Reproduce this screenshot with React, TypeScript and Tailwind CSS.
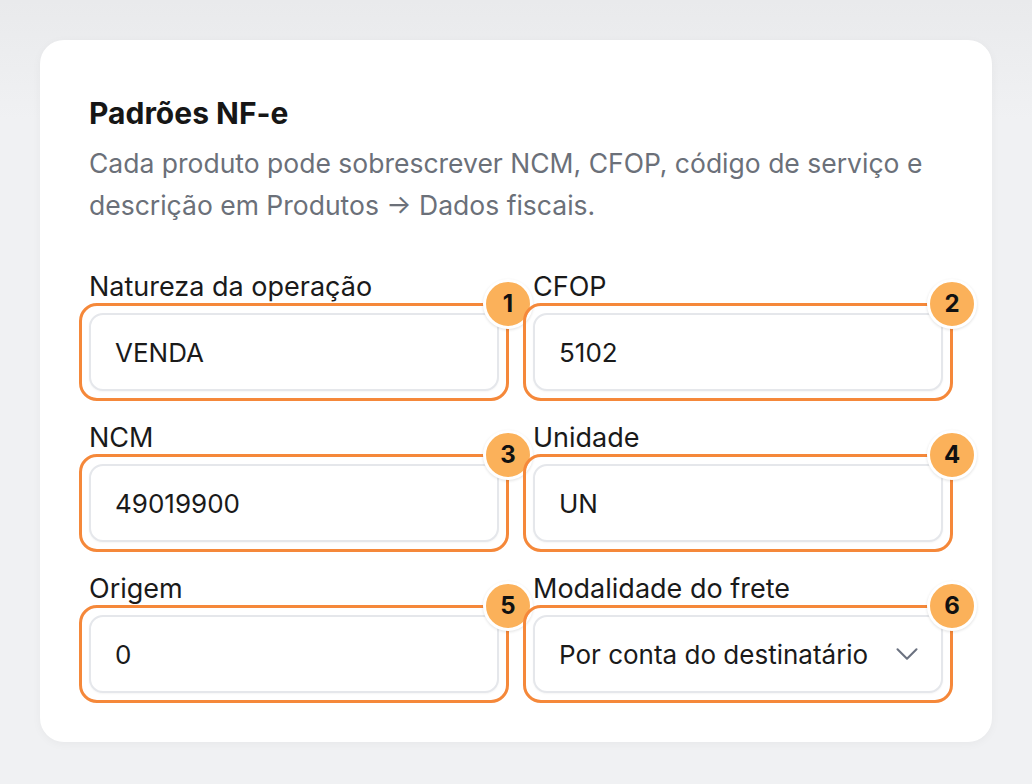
import { ChevronDown } from 'lucide-react';

interface Field {
  label: string;
  value: string;
  select?: boolean;
}

const fields: Field[] = [
  { label: 'Natureza da operação', value: 'VENDA' },
  { label: 'CFOP', value: '5102' },
  { label: 'NCM', value: '49019900' },
  { label: 'Unidade', value: 'UN' },
  { label: 'Origem', value: '0' },
  { label: 'Modalidade do frete', value: 'Por conta do destinatário', select: true },
];

const FieldBox = ({ field, index }: { field: Field; index: number }) => (
  <div className="flex flex-col">
    <label className="text-[27px] leading-[30px] text-[#1a1a1a] mb-[11px] whitespace-nowrap">{field.label}</label>
    <div className="relative">
      <div
        className={`h-[78px] rounded-[14px] border-2 border-[#e5e7eb] bg-white flex items-center pl-[24px] shadow-[0_1px_2px_rgba(0,0,0,0.04)] ${
          field.select ? 'pr-[15px]' : 'pr-[22px]'
        }`}
      >
        <span className="flex-1 text-[26px] text-[#1a1a1a] whitespace-nowrap overflow-hidden">{field.value}</span>
        {field.select && (
          <ChevronDown className="w-[38px] h-[38px] text-[#6b7280] ml-[8px] shrink-0" strokeWidth={1.3} />
        )}
      </div>
      {/* highlight overlay */}
      <div className="absolute -inset-[10px] rounded-[18px] border-[3px] border-[#f5883a] pointer-events-none" />
      <div className="absolute -top-[34px] -right-[34px] w-[50px] h-[50px] rounded-full bg-[#fbb15a] border-[3px] border-white shadow-[0_1px_3px_rgba(0,0,0,0.12)] flex items-center justify-center text-[24px] font-bold text-[#111]">
        {index + 1}
      </div>
    </div>
  </div>
);

export default function App() {
  return (
    <div className="min-h-[784px] bg-gradient-to-b from-[#e9eaec] to-[#f0f1f3] to-[120px] p-[40px] font-['Inter',sans-serif]">
      <div className="bg-white rounded-[24px] shadow-[0_2px_10px_rgba(0,0,0,0.04)] pt-[55px] px-[49px] pb-[49px]">
        <h2 className="text-[30px] leading-[36px] font-bold text-[#161616]">Padrões NF-e</h2>
        <p className="mt-[11px] text-[26.5px] leading-[42px] text-[#6b7079]">
          Cada produto pode sobrescrever NCM, CFOP, código de serviço e descrição em Produtos → Dados fiscais.
        </p>
        <div className="mt-[46px] grid grid-cols-2 gap-x-[34px] gap-y-[32px]">
          {fields.map((f, i) => (
            <FieldBox key={f.label} field={f} index={i} />
          ))}
        </div>
      </div>
    </div>
  );
}
